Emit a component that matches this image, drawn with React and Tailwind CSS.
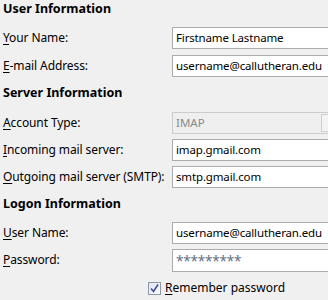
import React from "react";

const U = ({ c }) => <span className="underline underline-offset-[2px] decoration-[1px]">{c}</span>;

function Header({ children, mt }) {
  return (
    <div className={`h-4 leading-4 pl-[3px] font-bold text-[12.5px] text-black ${mt}`}>{children}</div>
  );
}

function Row({ label, mt, children }) {
  return (
    <div className={`flex items-center h-[22px] ${mt}`}>
      <div className="w-[172px] shrink-0 pl-[3px] text-[12px] text-black leading-4 tracking-[-0.1px]">{label}</div>
      {children}
    </div>
  );
}

function Input({ value }) {
  return (
    <div className="h-[22px] w-[170px] shrink-0 bg-white border border-[#acacac] flex items-center pl-[3px] text-[11.5px] tracking-[-0.15px] text-black whitespace-nowrap">
      {value}
    </div>
  );
}

export default function App() {
  return (
    <div
      className="w-[328px] h-[300px] overflow-hidden bg-[#f0f0f0]"
      style={{ fontFamily: '"Noto Sans", "Open Sans", sans-serif' }}
    >
      <Header mt="mt-[1px]">User Information</Header>
      <Row mt="mt-[10px]" label={<><U c="Y" />our Name:</>}>
        <Input value="Firstname Lastname" />
      </Row>
      <Row mt="mt-[6px]" label={<><U c="E" />-mail Address:</>}>
        <Input value="username@callutheran.edu" />
      </Row>
      <Header mt="mt-[8px]">Server Information</Header>
      <Row mt="mt-[11px]" label={<><U c="A" />ccount Type:</>}>
        <div className="h-[22px] w-[170px] shrink-0 bg-[#efefef] border border-[#cccccc] flex items-center pl-[3px] text-[11.5px] text-[#8a8a8a] relative">
          IMAP
          <div className="absolute left-[148px] top-[1px] h-[18px] w-[17px] border border-[#cfcfcf] bg-[#f3f3f3]" />
        </div>
      </Row>
      <Row mt="mt-[5px]" label={<><U c="I" />ncoming mail server:</>}>
        <Input value="imap.gmail.com" />
      </Row>
      <Row mt="mt-[5px]" label={<><U c="O" />utgoing mail server (SMTP):</>}>
        <Input value="smtp.gmail.com" />
      </Row>
      <Header mt="mt-[8px]">Logon Information</Header>
      <Row mt="mt-[10px]" label={<><U c="U" />ser Name:</>}>
        <Input value="username@callutheran.edu" />
      </Row>
      <Row mt="mt-[5px]" label={<><U c="P" />assword:</>}>
        <div className="h-[23px] w-[170px] shrink-0 bg-white border border-[#acacac] flex items-start pt-[3px] pl-[3px] text-[13.5px] leading-4 text-[#5f6e86] tracking-[-0.2px]">
          *********
        </div>
      </Row>
      <div className="flex items-center h-4 mt-[9px] pl-[148px]">
        <div className="w-[13px] h-[13px] border border-[#8f98a8] bg-gradient-to-br from-[#dfe6f0] to-[#fbfbfb] flex items-center justify-center">
          <svg width="11" height="11" viewBox="0 0 11 11">
            <path d="M2 5.5 L4.5 8.5 L9 1.5" fill="none" stroke="#3b4fa0" strokeWidth="1.6" />
          </svg>
        </div>
        <span className="ml-[4px] text-[12px] text-black leading-4">
          <U c="R" />emember password
        </span>
      </div>
    </div>
  );
}
